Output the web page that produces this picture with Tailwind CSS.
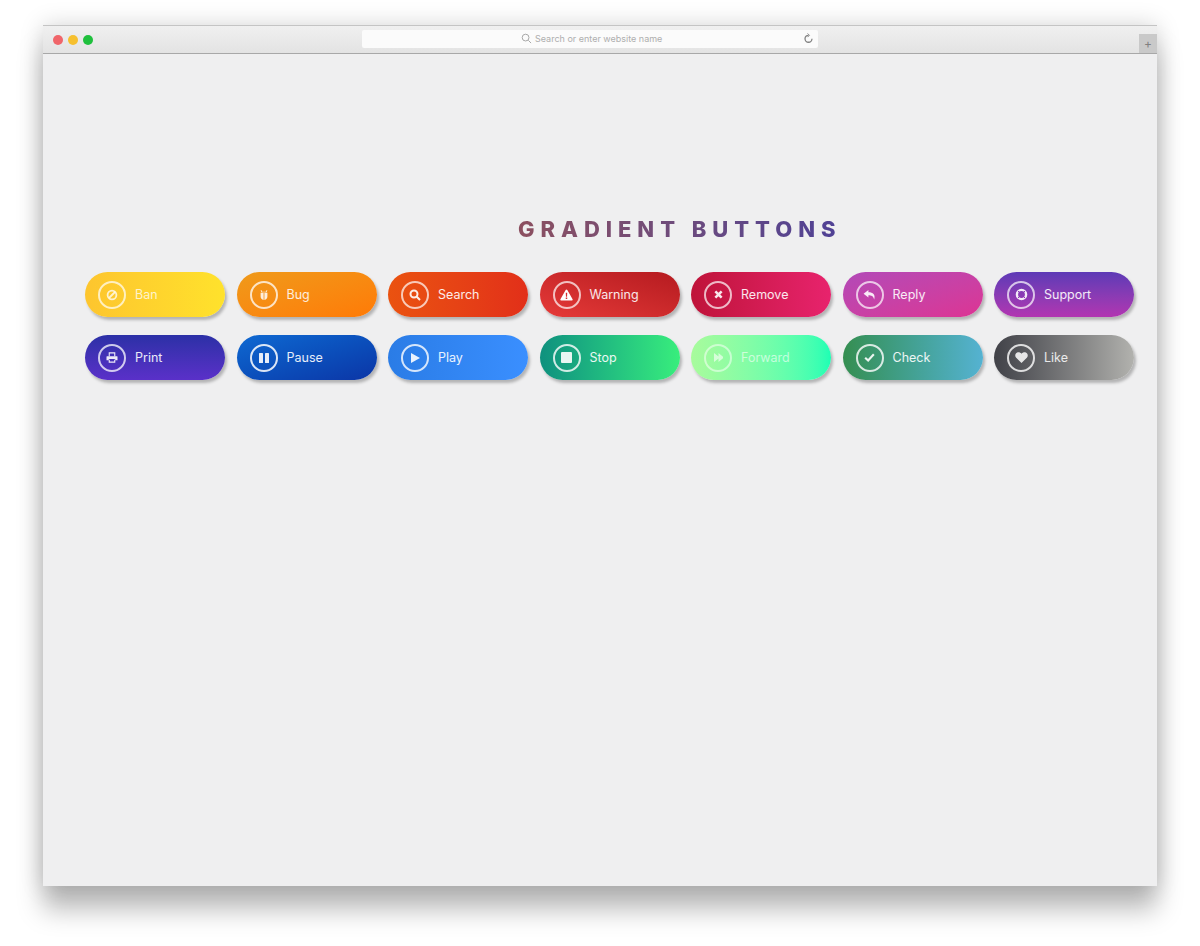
<!DOCTYPE html>
<html>
<head>
    <title>Gradient Buttons</title>
    <script src="https://cdn.jsdelivr.net/npm/@tailwindcss/browser@4"></script>
</head>
<body class="bg-white min-h-screen overflow-hidden pt-[25px] pl-[43px] font-['Inter',sans-serif]">
    <div class="w-[1114px] h-[861px] bg-[#efeff0] shadow-[0_24px_24px_rgba(0,0,0,0.26),0_0_22px_rgba(0,0,0,0.17)]">
        <!-- browser toolbar -->
        <div class="relative h-[29px] flex items-center pl-[10px] bg-gradient-to-b from-[#f0f0f0] to-[#e3e3e3] border-t border-[#c4c4c4] border-b-[#a8a8a8] border-b">
            <div class="flex gap-[5px]">
                <span class="w-[10px] h-[10px] rounded-full bg-[#f0656a]"></span>
                <span class="w-[10px] h-[10px] rounded-full bg-[#f6c02f]"></span>
                <span class="w-[10px] h-[10px] rounded-full bg-[#1fc03d]"></span>
            </div>
            <div class="flex items-center w-[456px] h-[18px] ml-[269px] mb-[2px] pl-[159px] pr-[4px] rounded-[2px] bg-[#fbfbfb] text-[#aeaeae] text-[9px]">
                <svg class="w-[11px] h-[11px] mr-[3px]" viewBox="0 0 12 12" fill="none" stroke="#a0a0a0" stroke-width="1"><circle cx="5" cy="5" r="3.7"/><path d="M8 8l3 3"/></svg>
                <span>Search or enter website name</span>
                <svg class="w-[11px] h-[11px] ml-auto" viewBox="0 0 12 12" fill="none" stroke="#808080" stroke-width="1.4"><path d="M6 2.500a3.800 3.800 0 1 0 3.800 3.800"/><path d="M5 .5l2 2-2 2" stroke-width="1"/></svg>
            </div>
            <div class="absolute right-0 bottom-0 w-[18px] h-[19px] flex items-center justify-center bg-[#c9c9c9] text-[#808080] text-[12px] leading-none">+</div>
        </div>

        <h1 class="mt-[162px] ml-[475px] w-[340px] text-[22px] leading-[26px] font-extrabold tracking-[5.95px] whitespace-nowrap text-transparent bg-clip-text bg-gradient-to-r from-[#8c4f5f] to-[#4c3f98]">GRADIENT BUTTONS</h1>

        <div class="mt-[30px] ml-[42px] grid grid-cols-[repeat(7,140px)] gap-x-[11.5px] gap-y-[18px] text-[12.5px] text-white">
            <a class="h-[45px] flex items-center gap-[9px] pl-[13px] rounded-full shadow-[2px_3px_3px_rgba(0,0,0,0.25)] bg-gradient-to-r from-[#fdc52e] to-[#ffe22c] text-white/75">
                <span class="w-[28px] h-[28px] flex items-center justify-center rounded-full border-2 border-white/70">
                    <svg class="w-[12px] h-[12px]" viewBox="0 0 12 12" fill="none" stroke="currentColor" stroke-width="1.800"><circle cx="6" cy="6" r="4.400"/><path d="M3 9l6-6"/></svg>
                </span><span class="pt-[2px]">Ban</span></a>
            <a class="h-[45px] flex items-center gap-[9px] pl-[13px] rounded-full shadow-[2px_3px_3px_rgba(0,0,0,0.25)] bg-gradient-to-br from-[#ef9a1a] to-[#ff7a06] text-white/85">
                <span class="w-[28px] h-[28px] flex items-center justify-center rounded-full border-2 border-white/75">
                    <svg class="w-[12px] h-[12px]" viewBox="0 0 12 12" fill="currentColor"><path d="M3.500 3.200L2.600 1.400l.7-.4 1 1.700h3.400l1-1.700.7.4-.9 1.800z"/><path d="M2.600 3.800h3v7.200C3.800 10.800 2.600 9.400 2.600 7.600zM6.400 3.800h3v3.800c0 1.800-1.200 3.200-3 3.400z"/></svg>
                </span><span class="pt-[2px]">Bug</span></a>
            <a class="h-[45px] flex items-center gap-[9px] pl-[13px] rounded-full shadow-[2px_3px_3px_rgba(0,0,0,0.25)] bg-gradient-to-r from-[#ea5210] to-[#e22f19] text-white/90">
                <span class="w-[28px] h-[28px] flex items-center justify-center rounded-full border-2 border-white/70">
                    <svg class="w-[12px] h-[12px]" viewBox="0 0 12 12" fill="none" stroke="currentColor" stroke-width="2"><circle cx="5" cy="5" r="3.500"/><path d="M7.800 7.800L11 11"/></svg>
                </span><span class="pt-[2px]">Search</span></a>
            <a class="h-[45px] flex items-center gap-[9px] pl-[13px] rounded-full shadow-[2px_3px_3px_rgba(0,0,0,0.25)] bg-gradient-to-tr from-[#e63a38] to-[#b51a20] text-white/90">
                <span class="w-[28px] h-[28px] flex items-center justify-center rounded-full border-2 border-white/70">
                    <svg class="w-[13px] h-[12px]" viewBox="0 0 14 13"><path fill="#fff" d="M7 .5c.4 0 .7.2.9.6l5.700 10c.3.6-.1 1.400-.9 1.400H1.300c-.8 0-1.200-.8-.9-1.400l5.700-10c.2-.4.5-.6.9-.6z"/><path fill="#d22b30" d="M6.200 4h1.600l-.2 4.400H6.400zM6.200 9.200h1.600v1.500H6.200z"/></svg>
                </span><span class="pt-[2px]">Warning</span></a>
            <a class="h-[45px] flex items-center gap-[9px] pl-[13px] rounded-full shadow-[2px_3px_3px_rgba(0,0,0,0.25)] bg-gradient-to-r from-[#bf1339] to-[#e8236d] text-white/90">
                <span class="w-[28px] h-[28px] flex items-center justify-center rounded-full border-2 border-white/70">
                    <svg class="w-[9px] h-[9px]" viewBox="0 0 10 10" fill="none" stroke="currentColor" stroke-width="2.800"><path d="M1.500 1.500l7 7M8.500 1.500l-7 7"/></svg>
                </span><span class="pt-[2px]">Remove</span></a>
            <a class="h-[45px] flex items-center gap-[9px] pl-[13px] rounded-full shadow-[2px_3px_3px_rgba(0,0,0,0.25)] bg-gradient-to-br from-[#b249b8] to-[#dd3393] text-white/90">
                <span class="w-[28px] h-[28px] flex items-center justify-center rounded-full border-2 border-white/70">
                    <svg class="w-[13px] h-[12px]" viewBox="0 0 13 12" fill="currentColor"><path d="M5.400 1L.6 4.800l4.800 3.800V6.200c3 0 4.800.7 5.800 4.300C12.600 5.800 10 3.300 5.400 3.300z"/></svg>
                </span><span class="pt-[2px]">Reply</span></a>
            <a class="h-[45px] flex items-center gap-[9px] pl-[13px] rounded-full shadow-[2px_3px_3px_rgba(0,0,0,0.25)] bg-gradient-to-b from-[#5d39b6] to-[#b234b1] text-white/90">
                <span class="w-[28px] h-[28px] flex items-center justify-center rounded-full border-2 border-white/70">
                    <svg class="w-[13px] h-[13px]" viewBox="0 0 13 13" fill="none" stroke="currentColor"><circle cx="6.500" cy="6.500" r="4.600" stroke-width="2.400"/><path d="M3 3l2 2M10 3L8 5M3 10l2-2M10 10L8 8" stroke="#8a36b4" stroke-width="1"/></svg>
                </span><span class="pt-[2px]">Support</span></a>

            <a class="h-[45px] flex items-center gap-[9px] pl-[13px] rounded-full shadow-[2px_3px_3px_rgba(0,0,0,0.25)] bg-gradient-to-b from-[#2b30a6] to-[#5a30c9] text-white/90">
                <span class="w-[28px] h-[28px] flex items-center justify-center rounded-full border-2 border-white/75">
                    <svg class="w-[12px] h-[11px]" viewBox="0 0 13 12" fill="none" stroke="currentColor"><path stroke-width="1.200" d="M3.500 4.500V1h6v3.500M3.500 8.500v2.500h6V8.500"/><path fill="currentColor" stroke="none" d="M1 4.500h11a.8.8 0 0 1 .5.800V9H10V7.500H3V9H.5V5.300a.8.8 0 0 1 .5-.8z"/></svg>
                </span><span class="pt-[2px]">Print</span></a>
            <a class="h-[45px] flex items-center gap-[9px] pl-[13px] rounded-full shadow-[2px_3px_3px_rgba(0,0,0,0.25)] bg-gradient-to-br from-[#0f69d2] to-[#0c35a6] text-white/90">
                <span class="w-[28px] h-[28px] flex items-center justify-center rounded-full border-2 border-white/85">
                    <svg class="w-[12px] h-[12px]" viewBox="0 0 12 12" fill="currentColor"><rect x="1" y="1" width="4" height="10" rx=".6"/><rect x="7" y="1" width="4" height="10" rx=".6"/></svg>
                </span><span class="pt-[2px]">Pause</span></a>
            <a class="h-[45px] flex items-center gap-[9px] pl-[13px] rounded-full shadow-[2px_3px_3px_rgba(0,0,0,0.25)] bg-gradient-to-r from-[#2a7ce6] to-[#3a8fff] text-white/90">
                <span class="w-[28px] h-[28px] flex items-center justify-center rounded-full border-2 border-white/80">
                    <svg class="w-[12px] h-[12px]" viewBox="0 0 12 12" fill="currentColor"><path d="M2 1l9 5-9 5z"/></svg>
                </span><span class="pt-[2px]">Play</span></a>
            <a class="h-[45px] flex items-center gap-[9px] pl-[13px] rounded-full shadow-[2px_3px_3px_rgba(0,0,0,0.25)] bg-gradient-to-r from-[#0f917e] to-[#38ee7c] text-white/90">
                <span class="w-[28px] h-[28px] flex items-center justify-center rounded-full border-2 border-white/80">
                    <svg class="w-[11px] h-[11px]" viewBox="0 0 11 11" fill="currentColor"><rect width="11" height="11" rx="1"/></svg>
                </span><span class="pt-[2px]">Stop</span></a>
            <a class="h-[45px] flex items-center gap-[9px] pl-[13px] rounded-full shadow-[2px_3px_3px_rgba(0,0,0,0.25)] bg-gradient-to-r from-[#a8fb9c] to-[#1bffb4] text-white/60">
                <span class="w-[28px] h-[28px] flex items-center justify-center rounded-full border-2 border-white/50">
                    <svg class="w-[11px] h-[9px]" viewBox="0 0 12 10" fill="currentColor"><path d="M1 0l5 4V0l5 4.200v1.600L6 10V6l-5 4z"/></svg>
                </span><span class="pt-[2px]">Forward</span></a>
            <a class="h-[45px] flex items-center gap-[9px] pl-[13px] rounded-full shadow-[2px_3px_3px_rgba(0,0,0,0.25)] bg-gradient-to-r from-[#358e50] to-[#55b2d2] text-white/90">
                <span class="w-[28px] h-[28px] flex items-center justify-center rounded-full border-2 border-white/80">
                    <svg class="w-[11px] h-[9px]" viewBox="0 0 12 10" fill="none" stroke="currentColor" stroke-width="2.400"><path d="M1.200 5.200L4.500 8.300l6.300-6.800"/></svg>
                </span><span class="pt-[2px]">Check</span></a>
            <a class="h-[45px] flex items-center gap-[9px] pl-[13px] rounded-full shadow-[2px_3px_3px_rgba(0,0,0,0.25)] bg-gradient-to-r from-[#414248] to-[#b2b2ae] text-white/85">
                <span class="w-[28px] h-[28px] flex items-center justify-center rounded-full border-2 border-white/80">
                    <svg class="w-[13px] h-[11px]" viewBox="0 0 14 12" fill="currentColor"><path d="M7 12L1.200 6.400C-.6 4.500.1 1.500 2.300.6 4 0 5.800.5 7 2c1.200-1.500 3-2 4.700-1.400 2.200.9 2.900 3.900 1.100 5.800z"/></svg>
                </span><span class="pt-[2px]">Like</span></a>
        </div>
    </div>
</body>
</html>
